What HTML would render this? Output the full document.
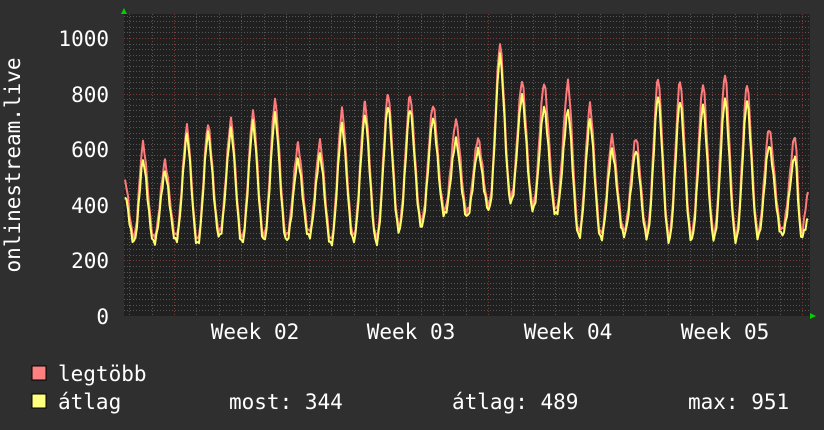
<!DOCTYPE html>
<html><head><meta charset="utf-8"><style>
html,body{margin:0;padding:0;background:#2f2f2f;}
body{width:824px;height:430px;overflow:hidden;position:relative;font-family:"DejaVu Sans Mono","Liberation Mono",monospace;color:#fff;}
</style></head><body>
<svg id="g" width="824" height="430" xmlns="http://www.w3.org/2000/svg" style="position:absolute;left:0;top:0">
<rect x="124" y="14" width="686" height="302" fill="#202020"/>
<g id="grid"></g>
<g id="data"></g>
<polygon points="121,14 127,14 124,8" fill="#00d000"/>
<polygon points="810,313 810,319 816,316" fill="#00d000"/>
<g font-family="DejaVu Sans Mono, Liberation Mono, monospace" font-size="21" fill="#fff">
<text x="109" y="46" text-anchor="end">1000</text>
<text x="109" y="102" text-anchor="end">800</text>
<text x="109" y="157" text-anchor="end">600</text>
<text x="109" y="213" text-anchor="end">400</text>
<text x="109" y="268" text-anchor="end">200</text>
<text x="109" y="324" text-anchor="end">0</text>
<text x="255" y="339" text-anchor="middle">Week 02</text>
<text x="411" y="339" text-anchor="middle">Week 03</text>
<text x="568" y="339" text-anchor="middle">Week 04</text>
<text x="725" y="339" text-anchor="middle">Week 05</text>
<text transform="translate(20,165) rotate(-90)" text-anchor="middle">onlinestream.live</text>
<text x="58" y="381">legtöbb</text>
<text x="58" y="409">átlag</text>
<text x="229" y="409">most: 344</text>
<text x="452" y="409">átlag: 489</text>
<text x="688" y="409">max: 951</text>
</g>
<rect x="32" y="366" width="14" height="14" fill="#ff8080" stroke="#000" stroke-width="1"/>
<rect x="32" y="394" width="14" height="14" fill="#ffff80" stroke="#000" stroke-width="1"/>
</svg>
<script>
var ns="http://www.w3.org/2000/svg",grid=document.getElementById('grid'),data=document.getElementById('data');
function ln(x1,y1,x2,y2,c,d){var l=document.createElementNS(ns,'line');l.setAttribute('x1',x1);l.setAttribute('y1',y1);l.setAttribute('x2',x2);l.setAttribute('y2',y2);l.setAttribute('stroke',c);l.setAttribute('stroke-width',1);if(d)l.setAttribute('stroke-dasharray',d);grid.appendChild(l);}
for(var v=20;v<=1080;v+=20){var y=Math.round(316-v*0.278)+.5;if(y<14)break;ln(124,y,810,y,v%200==0?'#7a3a3a':'#555','1,2');}
for(var x=174-22.4*2;x<810;x+=22.43){var xx=Math.round(x)+.5;if(xx<125)continue;var major=Math.abs(((xx-174)%157)) <3 || Math.abs(((xx-174)%157)-157)<3;ln(xx,14,xx,316,major?'#7a3a3a':'#555','1,2');}
var P=[[125,180,195],[143,143,160],[165,162,172],[187,127,135],[208,124,133],[231,120,130],[253,112,123],[275,100,115],[298,145,160],[320,142,155],[342,110,125],[365,103,115],[388,93,105],[410,95,108],[433,104,118],[456,120,140],[478,138,150],[500,43,55],[522,80,95],[544,82,107],[568,82,110],[590,105,120],[612,137,150],[636,137,150],[658,77,95],[680,80,100],[703,83,105],[725,73,98],[747,83,100],[769,128,145],[795,135,155],[808,192,220]];
var T=[237,238,236,240,232,238,236,236,232,240,236,238,226,222,210,212,205,198,205,210,232,234,230,232,236,235,234,236,232,230,232];
function build(idx,tr){var pts=[];for(var i=0;i<P.length-1;i++){var a=P[i],b=P[i+1],ya=a[idx],yb=b[idx],t=T[i]+tr,m=(a[0]+b[0])/2;
for(var x=a[0];x<b[0];x+=1.5){var y,f;if(x<m){f=(x-a[0])/(m-a[0]);}else{f=(b[0]-x)/(b[0]-m);}
f=(1-Math.cos(f*Math.PI))/2;f=Math.pow(f,0.8);
y=(x<m?ya+(t-ya)*f:yb+(t-yb)*f);
y+=Math.sin(x*1.7+idx)*3;pts.push(x.toFixed(1)+','+Math.min(y,312).toFixed(1));}}
pts.push(P[P.length-1][0]+','+P[P.length-1][idx]);return pts.join(' ');}
function pl(pts,c){var p=document.createElementNS(ns,'polyline');p.setAttribute('points',pts);p.setAttribute('fill','none');p.setAttribute('stroke',c);p.setAttribute('stroke-width',2);p.setAttribute('stroke-linejoin','round');data.appendChild(p);}
pl(build(1,0),'#ff7b7b');pl(build(2,5),'#ffff6e');
</script>
</body></html>
